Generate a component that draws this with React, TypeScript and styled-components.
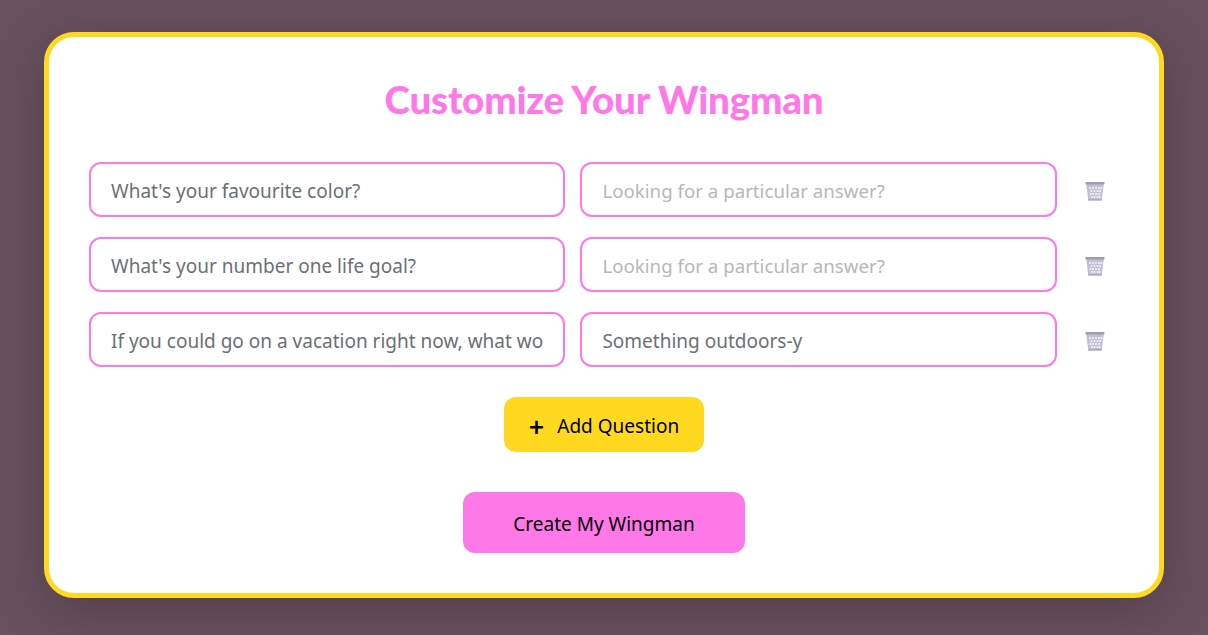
import React from "react";
import styled, { createGlobalStyle } from "styled-components";

const Global = createGlobalStyle`
  html, body { margin: 0; padding: 0; }
  body { background: #68505e; font-family: "Noto Sans", "Open Sans", sans-serif; }
  * { box-sizing: border-box; }
`;

const Page = styled.main`
  width: 1208px;
  height: 635px;
  padding: 32px 44px 37px;
  overflow: hidden;
  background: #68505e;
`;

const Card = styled.section`
  height: 566px;
  background: #fff;
  border: 5px solid #ffd91f;
  border-radius: 30px;
  padding: 40px;
  box-shadow: 0 12px 50px rgba(0, 0, 0, 0.22);
  display: flex;
  flex-direction: column;
`;

const Title = styled.h1`
  margin: 0 0 41px;
  height: 44px;
  line-height: 44px;
  text-align: center;
  font-family: "Lato", sans-serif;
  font-size: 38.5px;
  font-weight: 900;
  letter-spacing: -0.2px;
  color: #ff78e8;
`;

const Rows = styled.div`
  display: flex;
  flex-direction: column;
  gap: 20px;
`;

const Row = styled.div`
  display: flex;
  align-items: center;
  gap: 15px;
`;

const Field = styled.input`
  flex: 1 1 0;
  min-width: 0;
  height: 55px;
  padding: 2px 20px 0;
  border: 2px solid #ff78e8;
  border-radius: 12px;
  background: #fff;
  color: #6b7075;
  font-family: "Noto Sans", "Open Sans", sans-serif;
  font-size: 19px;
  outline: none;
  &::placeholder { color: #b7b7b7; opacity: 1; font-size: 18.7px; }
`;

const TrashButton = styled.button`
  flex: 0 0 47.2px;
  height: 55px;
  padding: 3px 0 0;
  border: 0;
  background: none;
  display: flex;
  align-items: center;
  justify-content: center;
`;

const Actions = styled.div`
  display: flex;
  flex-direction: column;
  align-items: center;
`;

const AddButton = styled.button`
  width: 200px;
  height: 55px;
  margin-top: 30px;
  border: 0;
  border-radius: 12px;
  background: #ffd91f;
  color: #000;
  font-family: "Noto Sans", "Open Sans", sans-serif;
  font-size: 19px;
  display: flex;
  align-items: center;
  justify-content: center;
  gap: 13px;
  padding: 2px 0 0;
`;

const PlusMark = styled.span`
  font-size: 27px;
  font-weight: 600;
  line-height: 1;
  position: relative;
  top: 1px;
`;

const CreateButton = styled.button`
  width: 282px;
  height: 61px;
  margin-top: 40px;
  border: 0;
  border-radius: 12px;
  background: #ff78e8;
  color: #000;
  font-family: "Noto Sans", "Open Sans", sans-serif;
  font-size: 19px;
  padding: 2px 0 0;
`;

const meshDots = [
  [5, 7], [8, 7], [11, 7], [14, 7], [16.5, 7],
  [6.5, 10], [9.5, 10], [12.5, 10], [15, 10],
  [5.5, 13], [8, 13], [11, 13], [14, 13],
  [7, 16], [9.5, 16], [12.5, 16], [14.5, 16],
];

const TrashIcon = () => (
  <svg width="20" height="20" viewBox="0 0 20 20" aria-hidden="true">
    <path d="M1 1.5h18l-2.2 17a1 1 0 0 1-1 .9H4.2a1 1 0 0 1-1-.9z" fill="#c3c0d3" />
    {meshDots.map(([x, y]) => (
      <circle key={`${x}-${y}`} cx={x} cy={y} r="1" fill="#f6f5fa" />
    ))}
    <rect x="0.5" y="1" width="19" height="2.4" rx="0.6" fill="#a09dae" />
    <rect x="3" y="18" width="14" height="1.6" rx="0.6" fill="#aca7cb" />
  </svg>
);

const questions = [
  { question: "What's your favourite color?", answer: "" },
  { question: "What's your number one life goal?", answer: "" },
  { question: "If you could go on a vacation right now, what would you do?", answer: "Something outdoors-y" },
];

export default function App() {
  return (
    <Page>
      <Global />
      <Card>
        <Title>Customize Your Wingman</Title>
        <Rows>
          {questions.map((q) => (
            <Row key={q.question}>
              <Field defaultValue={q.question} aria-label="Question" />
              <Field defaultValue={q.answer} placeholder="Looking for a particular answer?" aria-label="Answer" />
              <TrashButton aria-label="Delete question"><TrashIcon /></TrashButton>
            </Row>
          ))}
        </Rows>
        <Actions>
          <AddButton><PlusMark>+</PlusMark>Add Question</AddButton>
          <CreateButton>Create My Wingman</CreateButton>
        </Actions>
      </Card>
    </Page>
  );
}
